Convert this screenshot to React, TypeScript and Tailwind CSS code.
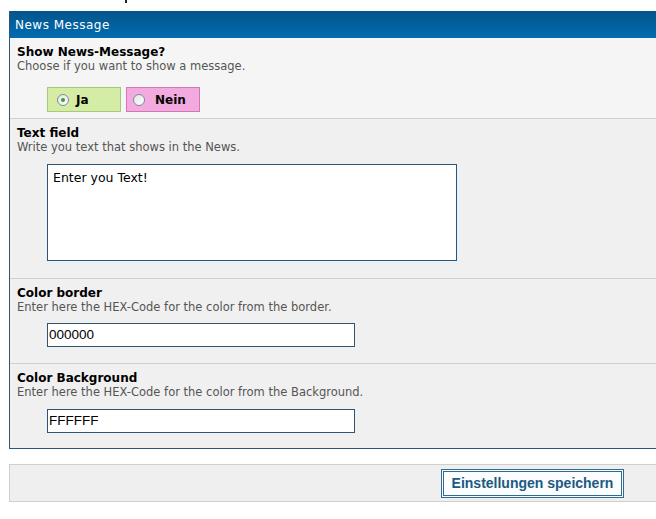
import React from "react";

function Row({
  title,
  desc,
  first,
  bg,
  children,
  pb,
}: {
  title: string;
  desc: string;
  first?: boolean;
  bg: string;
  children: React.ReactNode;
  pb: string;
}) {
  return (
    <div className={`${first ? "" : "border-t border-[#d0d0d0]"} ${bg} pl-[7px] pt-[7px] ${pb}`}>
      <div className="text-[12px] leading-[14px] font-bold text-black">{title}</div>
      <div className="text-[11.5px] leading-[14px] text-[#555555]">{desc}</div>
      {children}
    </div>
  );
}

function Radio({ checked }: { checked?: boolean }) {
  return (
    <span className="flex h-[12px] w-[12px] items-center justify-center rounded-full border border-[#7b8b9b] bg-gradient-to-br from-[#e4e4e4] to-white">
      {checked && <span className="h-[4px] w-[4px] rounded-full bg-[#3c9a3c]" />}
    </span>
  );
}

export default function App() {
  return (
    <div
      className="w-[656px] h-[519px] overflow-hidden bg-white"
      style={{ fontFamily: '"DejaVu Sans", Verdana, sans-serif' }}
    >
      <div className="h-[11px]">
        <div className="ml-[125px] h-[3px] w-[2px] bg-[#222]" />
      </div>
      <div className="ml-[9px] w-[660px] border-l border-b border-[#2b5878]">
        <div className="h-[27px] bg-gradient-to-b from-[#03558a] to-[#006cb2] pl-[5px] pt-[1px] text-[12px] leading-[26px] tracking-[0.5px] text-white">
          News Message
        </div>
        <Row title="Show News-Message?" desc="Choose if you want to show a message." first bg="bg-[#f4f5f4]" pb="pb-[6px]">
          <div className="mt-[14px] ml-[30px] flex gap-[5px]">
            <div className="flex h-[25px] w-[74px] items-center border border-[#a6c97e] bg-[#d4eca4] pl-[9px]">
              <Radio checked />
              <span className="ml-[7px] text-[12px] font-bold text-black">Ja</span>
            </div>
            <div className="flex h-[25px] w-[74px] items-center border border-[#cf78b4] bg-[#f2aadf] pl-[6px]">
              <Radio />
              <span className="ml-[10px] text-[12px] font-bold text-black">Nein</span>
            </div>
          </div>
        </Row>
        <Row title="Text field" desc="Write you text that shows in the News." bg="bg-[#f0f0f0]" pb="pb-[17px]">
          <div className="mt-[10px] ml-[30px] h-[97px] w-[410px] border border-[#2f5573] bg-white pl-[5px] pt-[5px] text-[12.5px] leading-[15px] text-black shadow-[1px_1px_0_1px_#e6f3fc]">
            Enter you Text!
          </div>
        </Row>
        <Row title="Color border" desc="Enter here the HEX-Code for the color from the border." bg="bg-[#f0f0f0]" pb="pb-[16px]">
          <div
            className="mt-[9px] ml-[30px] flex h-[24px] w-[308px] items-center border border-[#2f5573] bg-white pl-[1px] text-[13.5px] text-black"
            style={{ fontFamily: '"Liberation Sans", Arial, sans-serif' }}
          >
            000000
          </div>
        </Row>
        <Row title="Color Background" desc="Enter here the HEX-Code for the color from the Background." bg="bg-[#f0f0f0]" pb="pb-[15px]">
          <div
            className="mt-[10px] ml-[30px] flex h-[24px] w-[308px] items-center border border-[#2f5573] bg-white pl-[1px] text-[13.5px] text-black"
            style={{ fontFamily: '"Liberation Sans", Arial, sans-serif' }}
          >
            FFFFFF
          </div>
        </Row>
      </div>
      <div className="mt-[15px] ml-[9px] flex h-[38px] w-[660px] items-center justify-end border-y border-l border-[#cfcfcf] bg-[#efefef] pr-[45px]">
        <button
          className="flex h-[29px] w-[183px] items-center justify-center border-[3px] border-double border-[#2f6a8f] bg-[#fafcfd] text-[14px] font-bold text-[#1c5a82]"
          style={{ fontFamily: '"Liberation Sans", Arial, sans-serif' }}
        >
          Einstellungen speichern
        </button>
      </div>
    </div>
  );
}
